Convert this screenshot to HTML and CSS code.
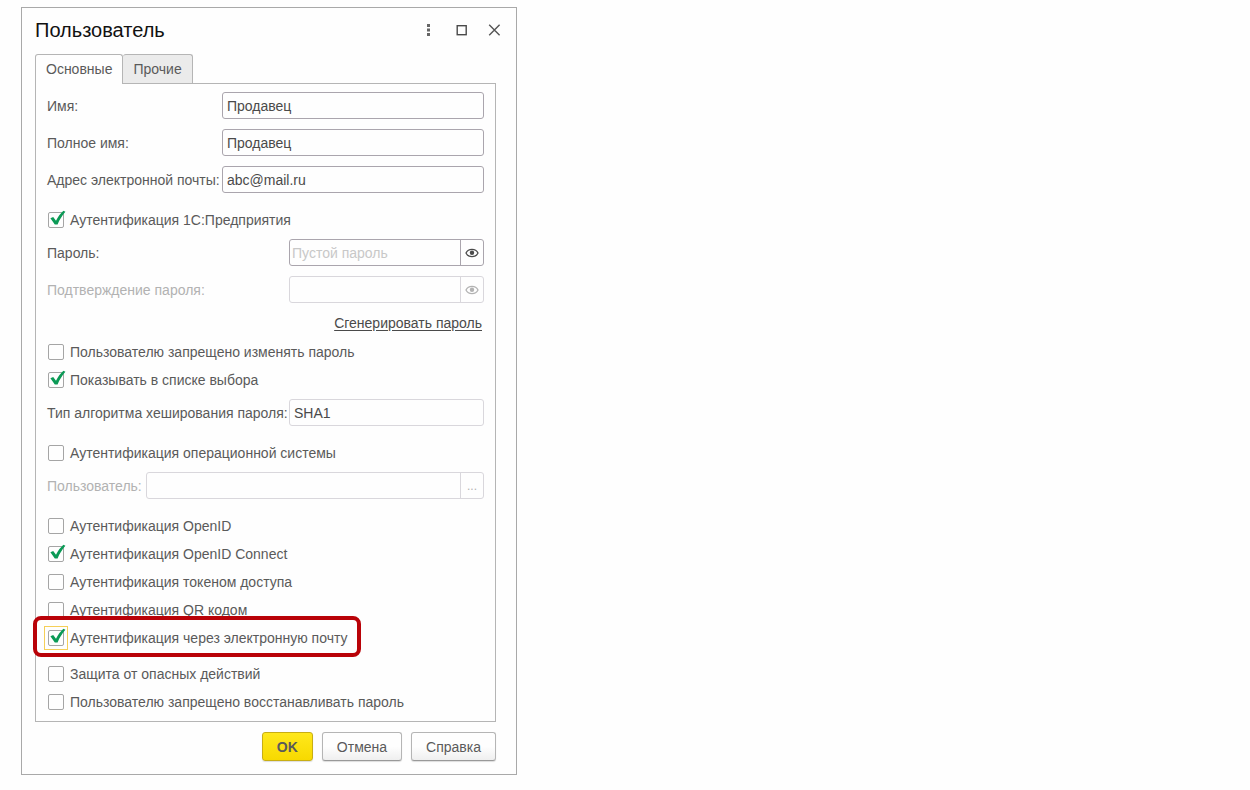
FILE: index.html
```
<!DOCTYPE html>
<html lang="ru">

<head>
  <meta charset="UTF-8" />
  <meta name="viewport" content="width=device-width, initial-scale=1.0" />
  <title>Пользователь</title>
  <link rel="stylesheet" href="styles.css">
</head>

<body>
  <svg class="sprite" aria-hidden="true">
    <symbol id="tick" viewBox="0 0 20 20">
      <path d="M3.4 8.2 L6.2 7 L9 10.8 C10.8 7 13.4 3.4 16.4 .8 L18.4 1.8 C15 5.8 12.4 10 10.6 14.4 L7.8 14.4 Z" />
    </symbol>
    <symbol id="eye" viewBox="0 0 14 10">
      <path d="M1 5 C3.4 0.2 10.6 0.2 13 5 C10.6 9.8 3.4 9.8 1 5 Z" fill="none" stroke="currentColor" stroke-width="1.3" />
      <circle cx="7" cy="4.8" r="2.2" fill="currentColor" />
    </symbol>
  </svg>

  <form class="dialog">
    <header class="titlebar">
      <h1>Пользователь</h1>
      <div class="tools">
        <button type="button" class="tool" aria-label="Ещё">
          <svg width="14" height="14" viewBox="0 0 14 14">
            <path d="M5 1h3v3H5z M5 5.5h3v3H5z M5 10h3v3H5z" fill="#666" />
          </svg>
        </button>
        <button type="button" class="tool" aria-label="Развернуть">
          <svg width="14" height="14" viewBox="0 0 14 14">
            <rect x="2.2" y="2.7" width="9" height="9" fill="none" stroke="#4a4a4a" stroke-width="1.4" />
          </svg>
        </button>
        <button type="button" class="tool" aria-label="Закрыть">
          <svg width="14" height="14" viewBox="0 0 14 14">
            <path d="M1.2 1.8 L11.6 12.2 M11.6 1.8 L1.2 12.2" stroke="#555" stroke-width="1.4" />
          </svg>
        </button>
      </div>
    </header>

    <nav class="tabs" role="tablist">
      <button type="button" class="tab active" role="tab" aria-selected="true">Основные</button>
      <button type="button" class="tab" role="tab" aria-selected="false">Прочие</button>
    </nav>

    <section class="panel">
      <div class="fields">
        <div class="row named">
          <label for="name">Имя:</label>
          <input type="text" class="box" id="name" value="Продавец">
        </div>
        <div class="row named">
          <label for="fullname">Полное имя:</label>
          <input type="text" class="box" id="fullname" value="Продавец">
        </div>
        <div class="row named">
          <label for="email">Адрес электронной почты:</label>
          <input type="text" class="box" id="email" value="abc@mail.ru">
        </div>
      </div>

      <div class="group">
        <label class="check"><input type="checkbox" checked><svg class="tick"><use href="#tick" /></svg>Аутентификация 1С:Предприятия</label>
        <div class="fields sub">
          <div class="row">
            <label for="pass">Пароль:</label>
            <div class="box combo half">
              <input type="password" id="pass" placeholder="Пустой пароль">
              <button type="button" aria-label="Показать пароль"><svg class="eye"><use href="#eye" /></svg></button>
            </div>
          </div>
          <div class="row disabled">
            <label for="pass2">Подтверждение пароля:</label>
            <div class="box combo half">
              <input type="password" id="pass2" disabled>
              <button type="button" aria-label="Показать пароль" disabled><svg class="eye"><use href="#eye" /></svg></button>
            </div>
          </div>
          <a href="#" class="generate">Сгенерировать пароль</a>
        </div>
        <div class="sub">
          <label class="check"><input type="checkbox">Пользователю запрещено изменять пароль</label>
          <label class="check"><input type="checkbox" checked><svg class="tick"><use href="#tick" /></svg>Показывать в списке выбора</label>
        </div>
        <div class="row sub">
          <label for="hash">Тип алгоритма хеширования пароля:</label>
          <input type="text" class="box half pale" id="hash" value="SHA1" readonly>
        </div>
      </div>

      <div class="group">
        <label class="check"><input type="checkbox">Аутентификация операционной системы</label>
        <div class="row sub disabled">
          <label for="osuser">Пользователь:</label>
          <div class="box combo wide">
            <input type="text" id="osuser" disabled>
            <button type="button" class="more" disabled>...</button>
          </div>
        </div>
      </div>

      <div class="group">
        <label class="check"><input type="checkbox">Аутентификация OpenID</label>
        <label class="check"><input type="checkbox" checked><svg class="tick"><use href="#tick" /></svg>Аутентификация OpenID Connect</label>
        <label class="check"><input type="checkbox">Аутентификация токеном доступа</label>
        <label class="check"><input type="checkbox">Аутентификация QR кодом</label>
        <label class="check focus"><input type="checkbox" checked><svg class="tick"><use href="#tick" /></svg>Аутентификация через электронную почту<span class="callout"></span></label>
      </div>

      <div class="group tight">
        <label class="check"><input type="checkbox">Защита от опасных действий</label>
        <label class="check"><input type="checkbox">Пользователю запрещено восстанавливать пароль</label>
      </div>
    </section>

    <footer class="actions">
      <button type="submit" class="btn primary">OK</button>
      <button type="button" class="btn">Отмена</button>
      <button type="button" class="btn">Справка</button>
    </footer>
  </form>
</body>

</html>
```
FILE: styles.css
```
:root {
  --text: #5a5a5a;
  --muted: #b2b2b2;
  --line: #a9a9a9;
  --field: #aaa5ad;
  --pale: #d9d7dc;
}

*,
*::before {
  box-sizing: border-box;
}

body {
  margin: 0;
  padding: 7px 21px;
  background-color: #fefefe;
  color: var(--text);
  font: 14px/20px "Liberation Sans", Arial, sans-serif;
}

button,
input {
  font: inherit;
  color: inherit;
}

button {
  padding: 0;
  border: 0;
  background: none;
}

.sprite {
  display: none;
}

.dialog {
  max-width: 496px;
  padding: 10px 20px 13px 13px;
  border: 1px solid var(--line);
}

.titlebar {
  display: flex;
  align-items: center;
  justify-content: space-between;
}

.titlebar h1 {
  margin: 0;
  font-size: 20px;
  line-height: 24px;
  font-weight: 400;
  color: #111;
}

.tools {
  display: flex;
  gap: 19px;
  margin-right: -6px;
}

.tool {
  width: 14px;
  height: 14px;
}

.tool svg {
  display: block;
}

/* tabs */
.tabs {
  display: flex;
  margin-top: 12px;
}

.tab {
  height: 29px;
  padding: 0 10px;
  border: 1px solid #b5b5b5;
  border-bottom: 0;
  border-radius: 3px 3px 0 0;
  background-color: #ebebeb;
}

.tab + .tab {
  border-left: 0;
}

.tab.active {
  position: relative;
  margin-bottom: -1px;
  height: 30px;
  padding-bottom: 1px;
  background-color: #fefefe;
}

.panel {
  padding: 8px 11px 5px;
  border: 1px solid #b5b5b5;
}

/* rows */
.fields {
  display: flex;
  flex-direction: column;
  gap: 10px;
}

.group {
  margin-top: 13px;
}

.group.tight {
  margin-top: 8px;
}

.sub {
  margin-top: 5px;
}

.row {
  display: flex;
  align-items: center;
  justify-content: space-between;
}

.named {
  display: grid;
  grid-template-columns: 175px 1fr;
}

.box {
  min-width: 0;
  height: 27px;
  padding: 0 4px;
  border: 1px solid var(--field);
  border-radius: 3px;
  background-color: #fefefe;
  color: #4a4a4a;
  outline: 0;
}

.half {
  width: 195px;
}

.wide {
  flex: 1;
  margin-left: 4px;
}

.pale,
.disabled .box {
  border-color: var(--pale);
}

.combo {
  display: flex;
  padding: 0;
}

.combo input {
  flex: 1;
  min-width: 0;
  padding: 0 2px;
  border: 0;
  background: none;
  outline: 0;
}

.combo input::placeholder {
  color: #c8c8c8;
}

.combo button {
  width: 23px;
  border-left: 1px solid var(--field);
}

.disabled,
.disabled .box {
  color: var(--muted);
}

.disabled .combo button {
  border-color: var(--pale);
}

.combo .more {
  font-size: 12px;
}

.eye {
  display: block;
  width: 14px;
  height: 10px;
  margin: 0 auto;
}

.generate {
  align-self: flex-end;
  margin-right: 2px;
  color: #4a4a4a;
  text-underline-offset: 2px;
}

/* checkboxes */
.check {
  position: relative;
  display: flex;
  align-items: center;
  gap: 6px;
  width: fit-content;
  height: 28px;
  padding-left: 1px;
}

.check input {
  appearance: none;
  width: 16px;
  height: 16px;
  margin: 0;
  border: 1px solid #a5a5a5;
  border-radius: 2px;
  background-color: #fefefe;
}

.tick {
  position: absolute;
  left: 0;
  top: 4px;
  width: 20px;
  height: 20px;
  fill: #0b9a56;
}

/* square focus frame around the box */
.check.focus::before {
  content: "";
  position: absolute;
  left: -3px;
  top: 2px;
  width: 24px;
  height: 24px;
  border: 1px solid #f5cf58;
}

.callout {
  position: absolute;
  inset: -8px -13px -5px -14px;
  border: 4px solid #b90208;
  border-radius: 8px;
}

/* bottom buttons */
.actions {
  display: flex;
  justify-content: flex-end;
  gap: 9px;
  margin-top: 10px;
}

.btn {
  height: 29px;
  padding: 0 14px;
  border: 1px solid #b5b5b5;
  border-bottom-color: #999;
  border-radius: 3px;
  background: linear-gradient(#fefefe 50%, #efefef);
  box-shadow: 0 1px 1px #ddd;
}

.btn.primary {
  border-color: #c8ae14;
  background: linear-gradient(#ffe81c, #f7d900);
  font-weight: 700;
}
```
